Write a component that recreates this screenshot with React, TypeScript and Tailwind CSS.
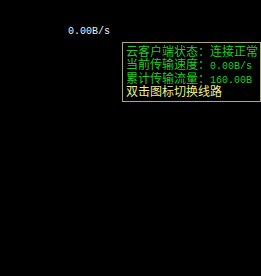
const cjk = "font-['Noto_Sans_CJK_SC',sans-serif]";
const mono = "font-['Liberation_Mono',monospace] text-[10px] leading-none";

const rows = [
  { label: "云客户端状态：", value: "连接正常", cjkValue: true },
  { label: "当前传输速度：", value: "0.00B/s", cjkValue: false },
  { label: "累计传输流量：", value: "160.00B", cjkValue: false },
];

export default function App() {
  return (
    <div className={`w-[261px] h-[276px] bg-black pt-[25px] ${cjk}`}>
      {/* 速度显示 */}
      <div className="pl-[68px] h-[14px] flex items-center text-[#f0f0f0]">
        <span className={mono}>0.00B/s</span>
      </div>

      {/* 提示框 */}
      <div className="ml-[122px] mt-[3px] w-[139px] h-[60px] border border-[#a8a878] bg-black pl-[3px] pt-[1px] text-[12px] whitespace-nowrap">
        {rows.map((row) => (
          <div
            key={row.label}
            className="h-[13.4px] flex items-baseline leading-[13.4px] text-[#22cc22]"
          >
            <span>{row.label}</span>
            {row.cjkValue ? (
              <span>{row.value}</span>
            ) : (
              <span className={mono}>{row.value}</span>
            )}
          </div>
        ))}
        <div className="h-[13.4px] leading-[13.4px] text-[#eeee88]">
          双击图标切换线路
        </div>
      </div>
    </div>
  );
}
